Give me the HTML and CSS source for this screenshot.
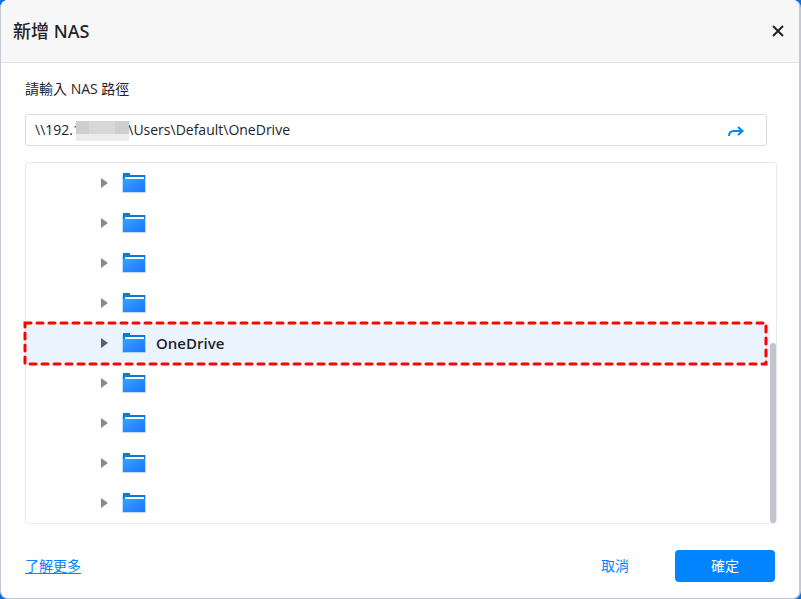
FILE: index.html
```html
<!DOCTYPE html>
<html lang="zh-Hant">
<head>
<meta charset="utf-8">
<title>新增 NAS</title>
<link rel="stylesheet" href="styles.css">
</head>
<body>
<svg class="defs" aria-hidden="true">
  <defs>
    <linearGradient id="front" x1="0" y1="0" x2="1" y2="1">
      <stop offset="0" stop-color="#36a3ff"/>
      <stop offset="1" stop-color="#1a74ff"/>
    </linearGradient>
    <symbol id="folder" viewBox="0 0 24 20">
      <path d="M1 0h7v2h15v6H1z" fill="#0b78dc"/>
      <path d="M3 4h19v2H3z" fill="#f2f8ff"/>
      <path d="M1 6h22v13H1z" fill="url(#front)"/>
      <path d="M0.500 2v17.500h23V2" fill="none" stroke="#8cc4ff" stroke-opacity=".6"/>
    </symbol>
    <symbol id="arrow" viewBox="0 0 8 12"><path d="M1 1v10l7-5z" fill="currentColor"/></symbol>
  </defs>
</svg>
<main class="dialog">
  <header class="header">
    <h1 class="title">新增 NAS</h1>
    <button class="close" type="button" aria-label="關閉">
      <svg width="12" height="12" viewBox="0 0 12 12"><path d="M1 1l10 10M11 1L1 11" fill="none" stroke="currentColor" stroke-width="2"/></svg>
    </button>
  </header>
  <form class="body">
    <label class="label" for="path">請輸入 NAS 路徑</label>
    <div class="field">
      <input class="path" id="path" type="text" value="\\192.1&nbsp;&nbsp;&nbsp;&nbsp;&nbsp;&nbsp;&nbsp;&nbsp;&nbsp;&nbsp;&nbsp;&nbsp;&nbsp;\Users\Default\OneDrive">
      <span class="mask"></span>
      <button class="go" type="button" aria-label="前往">
        <svg width="18" height="14" viewBox="0 0 18 14"><path d="M2 13C2 9.500 4 8 7 8h8M11 4l4.500 4L11 12" fill="none" stroke="currentColor" stroke-width="2"/></svg>
      </button>
    </div>
    <div class="tree">
      <ul class="rows">
        <li class="row"><svg class="arrow"><use href="#arrow"/></svg><svg class="folder"><use href="#folder"/></svg></li>
        <li class="row"><svg class="arrow"><use href="#arrow"/></svg><svg class="folder"><use href="#folder"/></svg></li>
        <li class="row"><svg class="arrow"><use href="#arrow"/></svg><svg class="folder"><use href="#folder"/></svg></li>
        <li class="row"><svg class="arrow"><use href="#arrow"/></svg><svg class="folder"><use href="#folder"/></svg></li>
        <li class="row selected"><svg class="arrow"><use href="#arrow"/></svg><svg class="folder"><use href="#folder"/></svg><span class="name">OneDrive</span><svg class="marker"><rect class="dash" width="100%" height="100%"/></svg></li>
        <li class="row"><svg class="arrow"><use href="#arrow"/></svg><svg class="folder"><use href="#folder"/></svg></li>
        <li class="row"><svg class="arrow"><use href="#arrow"/></svg><svg class="folder"><use href="#folder"/></svg></li>
        <li class="row"><svg class="arrow"><use href="#arrow"/></svg><svg class="folder"><use href="#folder"/></svg></li>
        <li class="row"><svg class="arrow"><use href="#arrow"/></svg><svg class="folder"><use href="#folder"/></svg></li>
      </ul>
      <div class="track"><div class="thumb"></div></div>
    </div>
    <footer class="footer">
      <a class="more" href="#">了解更多</a>
      <button class="btn cancel" type="button">取消</button>
      <button class="btn ok" type="submit">確定</button>
    </footer>
  </form>
</main>
</body>
</html>
```
FILE: styles.css
```css
* { box-sizing: border-box; }
body {
  margin: 0;
  background: #0a6fdc;
  color: #1f2329;
  font: 14px/20px "Open Sans", "Noto Sans CJK TC", sans-serif;
}
button, input { font: inherit; color: inherit; }
button { border: 0; padding: 0; background: none; cursor: pointer; }
.defs { position: absolute; width: 0; height: 0; }
.dialog {
  display: flex;
  flex-direction: column;
  min-height: 100vh;
  border: 1px solid #c3c8d4;
  border-top: 0;
  border-right-width: 2px;
  border-radius: 8px;
  background: #fff;
  overflow: hidden;
}
.header {
  display: flex;
  align-items: center;
  justify-content: space-between;
  height: 63px;
  padding: 0 15px 0 12px;
  border-bottom: 1px solid #e2e2e2;
  background: #f7f7f7;
}
.title { margin: 0; font-family: "Noto Sans", "Noto Sans CJK TC", sans-serif; font-size: 18px; font-weight: 500; line-height: 24px; }
.close { display: flex; }
.body { display: flex; flex-direction: column; padding: 16px 24px; }
.label { line-height: 20px; }
.field {
  position: relative;
  display: flex;
  align-items: center;
  height: 32px;
  margin: 15px 8px 16px 0;
  padding: 0 21px 0 9px;
  border: 1px solid #dcdcdc;
  border-radius: 3px;
}
.path { flex: 1; min-width: 0; padding: 0; border: 0; outline: 0; background: none; }
.mask {
  position: absolute;
  left: 50px;
  top: 6px;
  width: 53px;
  height: 20px;
  background: linear-gradient(90deg, #cecece 13px, #d6d7d9 13px 39px, #cecece 39px) top / 100% 13px no-repeat, #ececec;
}
.go { display: flex; color: #0084ff; }
.tree {
  display: flex;
  margin-right: -2px;
  border: 1px solid #e8e8e8;
  border-radius: 4px;
}
.rows { flex: 1; margin: 0; padding: 0; list-style: none; }
.row { position: relative; display: flex; align-items: center; height: 40px; padding-left: 74px; }
.arrow { width: 8px; height: 12px; margin-right: 14px; color: #858b98; }
.folder { width: 24px; height: 20px; }
.name { margin-left: 10px; font-size: 15px; font-weight: 600; }
.selected { background: #eaf4ff; }
.selected .arrow { color: #5a5f6a; }
.marker { position: absolute; left: -1px; top: 0; width: calc(100% - 3px); height: 41px; overflow: visible; }
.dash { fill: none; stroke: #f00; stroke-width: 3; stroke-dasharray: 6 6; stroke-linecap: round; }
.track { display: flex; align-items: flex-end; width: 6px; }
.thumb { width: 6px; height: 50%; border-radius: 3px; background: #c0c4cc; }
.footer { display: flex; align-items: center; margin-top: 26px; }
.more { margin-right: auto; color: #0084ff; text-underline-offset: 2px; }
.btn { width: 100px; height: 32px; border-radius: 4px; }
.cancel { margin-right: 10px; color: #0084ff; }
.ok { background: #0084ff; color: #fff; }
```
